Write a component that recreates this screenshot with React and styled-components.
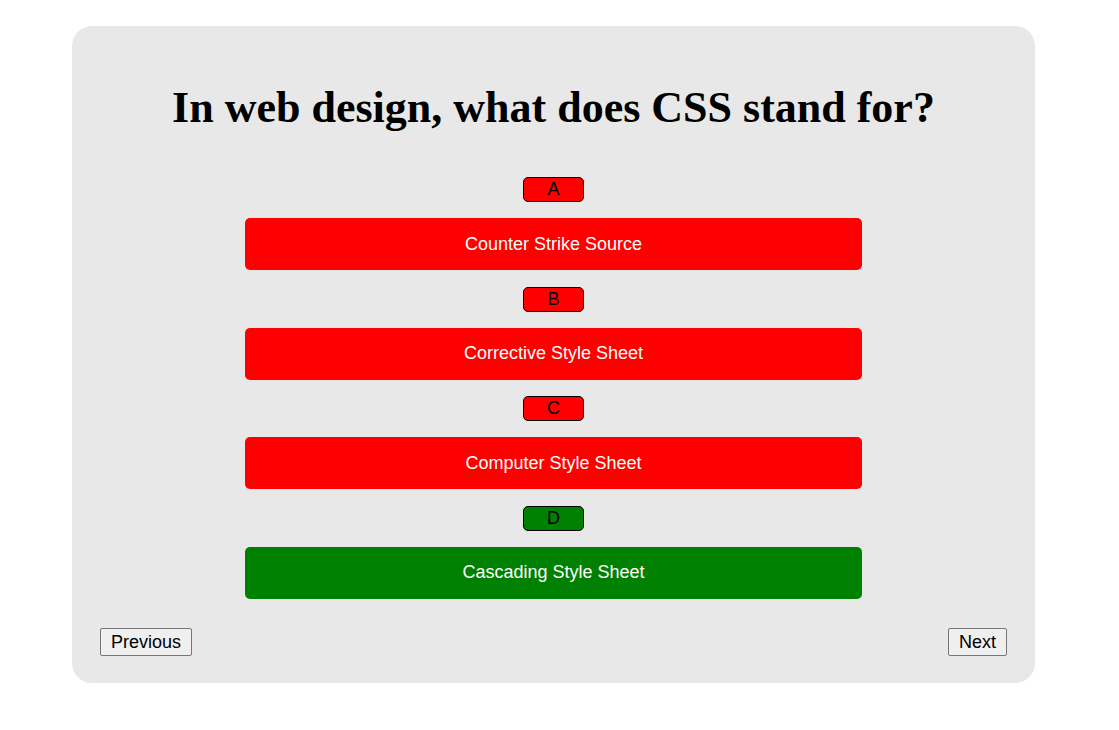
import React from "react";
import styled, { createGlobalStyle } from "styled-components";

const Global = createGlobalStyle`
  html, body { margin: 0; padding: 0; background: #fff; }
  body { font-family: "Liberation Serif", "Times New Roman", serif; }
`;

const Page = styled.div`
  padding: 26px 84px 0 72px;
`;

const Card = styled.div`
  width: 963px;
  height: 657px;
  box-sizing: border-box;
  background: #e8e8e8;
  border-radius: 20px;
  padding: 54px 28px 0 28px;
  display: flex;
  flex-direction: column;
`;

const Title = styled.h1`
  margin: 0 0 41px 0;
  text-align: center;
  font-family: "Liberation Serif", "Times New Roman", serif;
  font-weight: bold;
  font-size: 44px;
  line-height: 56px;
  color: #000;
`;

const Options = styled.div`
  display: flex;
  flex-direction: column;
  align-items: center;
`;

const Item = styled.div`
  display: flex;
  flex-direction: column;
  align-items: center;
  margin-bottom: 16.5px;
`;

const Badge = styled.div`
  width: 61px;
  height: 25px;
  box-sizing: border-box;
  border: 1px solid #000;
  border-radius: 5px;
  background: ${(p) => (p.$correct ? "#008000" : "#ff0000")};
  color: #000;
  font-family: "Liberation Sans", Arial, sans-serif;
  font-size: 18px;
  line-height: 23px;
  text-align: center;
  margin-bottom: 16px;
`;

const Answer = styled.button`
  width: 617px;
  height: 52px;
  border: none;
  border-radius: 5px;
  background: ${(p) => (p.$correct ? "#008000" : "#ff0000")};
  color: #fff;
  font-family: "Liberation Sans", Arial, sans-serif;
  font-size: 18px;
  padding: 0;
  cursor: pointer;
`;

const Nav = styled.div`
  display: flex;
  justify-content: space-between;
  margin-top: 13px;
`;

const NavButton = styled.button`
  height: 28px;
  box-sizing: border-box;
  padding: 0 10px;
  border: 1px solid #767676;
  border-radius: 2px;
  background: #efefef;
  color: #000;
  font-family: "Liberation Sans", Arial, sans-serif;
  font-size: 18px;
  line-height: 24px;
`;

const answers = [
  { letter: "A", text: "Counter Strike Source", correct: false },
  { letter: "B", text: "Corrective Style Sheet", correct: false },
  { letter: "C", text: "Computer Style Sheet", correct: false },
  { letter: "D", text: "Cascading Style Sheet", correct: true },
];

export default function App() {
  return (
    <>
      <Global />
      <Page>
        <Card>
          <Title>In web design, what does CSS stand for?</Title>
          <Options>
            {answers.map((a) => (
              <Item key={a.letter}>
                <Badge $correct={a.correct}>{a.letter}</Badge>
                <Answer $correct={a.correct}>{a.text}</Answer>
              </Item>
            ))}
          </Options>
          <Nav>
            <NavButton>Previous</NavButton>
            <NavButton>Next</NavButton>
          </Nav>
        </Card>
      </Page>
    </>
  );
}
